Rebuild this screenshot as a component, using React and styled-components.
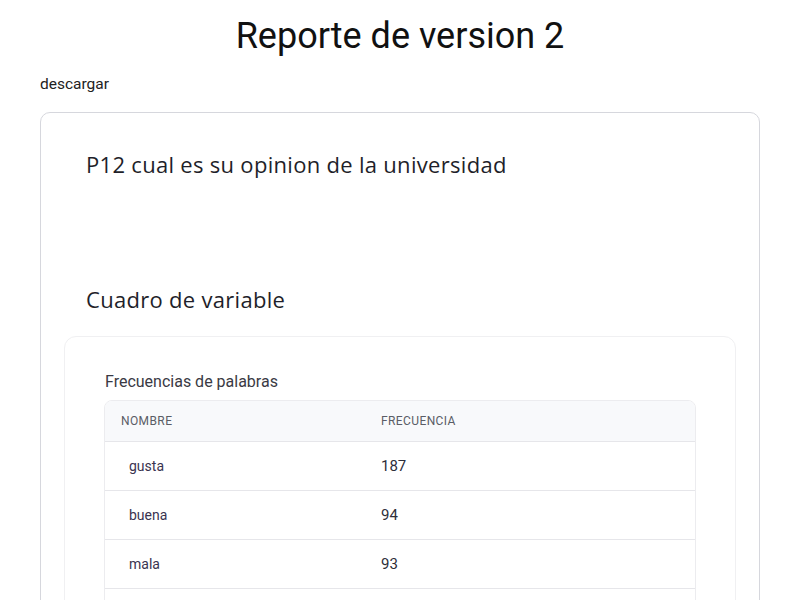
import React from "react";
import styled, { createGlobalStyle } from "styled-components";

const Global = createGlobalStyle`
  html, body { margin: 0; padding: 0; background: #fff; }
  body { font-family: Roboto, "Noto Sans", sans-serif; color: #1f1f1f; }
`;

const Page = styled.div`
  padding: 0 40px;
  display: flex;
  flex-direction: column;
`;

const Title = styled.h1`
  margin: 14px 0 0;
  text-align: center;
  font-weight: 400;
  font-size: 36px;
  line-height: 44px;
  color: #111;
`;

const Download = styled.div`
  margin-top: 16px;
  font-size: 15.5px;
  line-height: 20px;
  color: #222;
`;

const Card = styled.section`
  margin-top: 18px;
  border: 1px solid #d6d7dd;
  border-radius: 10px;
  padding: 36px 23px 0;
`;

const Heading = styled.h2`
  margin: 0 0 0 22px;
  font-family: "Open Sans", Roboto, sans-serif;
  font-weight: 400;
  font-size: 22px;
  letter-spacing: 0.3px;
  line-height: 30px;
  color: #1f1f2a;
  & + & { margin-top: 105px; }
`;

const Inner = styled.div`
  margin-top: 22px;
  border: 1px solid #f0f0f2;
  border-radius: 12px;
  padding: 35px 39px 0;
`;

const Caption = styled.div`
  padding-left: 1px;
  font-size: 16px;
  line-height: 20px;
  color: #3a3a44;
  margin-bottom: 8px;
`;

const Table = styled.div`
  border: 1px solid #ececef;
  border-radius: 8px;
  overflow: hidden;
`;

const Row = styled.div`
  display: grid;
  grid-template-columns: 260px 1fr;
  align-items: center;
  height: ${p => (p.$head ? 40 : 48)}px;
  background: ${p => (p.$head ? "#f8f9fb" : "#fff")};
  border-bottom: 1px solid #e6e6ea;
`;

const HeadCell = styled.div`
  padding-left: 16px;
  font-size: 12px;
  letter-spacing: 0.4px;
  text-transform: uppercase;
  color: #5a5d66;
`;

const NameCell = styled.div`
  padding-left: 24px;
  font-size: 14px;
  color: #3a3350;
`;

const NumCell = styled.div`
  padding-left: 16px;
  font-size: 15px;
  color: #2e2e3a;
`;

const data = [
  ["gusta", 187],
  ["buena", 94],
  ["mala", 93],
  ["", ""],
];

export default function App() {
  return (
    <>
      <Global />
      <Page>
        <Title>Reporte de version 2</Title>
        <Download>descargar</Download>
        <Card>
          <Heading>P12 cual es su opinion de la universidad</Heading>
          <Heading>Cuadro de variable</Heading>
          <Inner>
            <Caption>Frecuencias de palabras</Caption>
            <Table>
              <Row $head>
                <HeadCell>Nombre</HeadCell>
                <HeadCell>Frecuencia</HeadCell>
              </Row>
              {data.map(([n, v], i) => (
                <Row key={i}>
                  <NameCell>{n}</NameCell>
                  <NumCell>{v}</NumCell>
                </Row>
              ))}
            </Table>
          </Inner>
        </Card>
      </Page>
    </>
  );
}
